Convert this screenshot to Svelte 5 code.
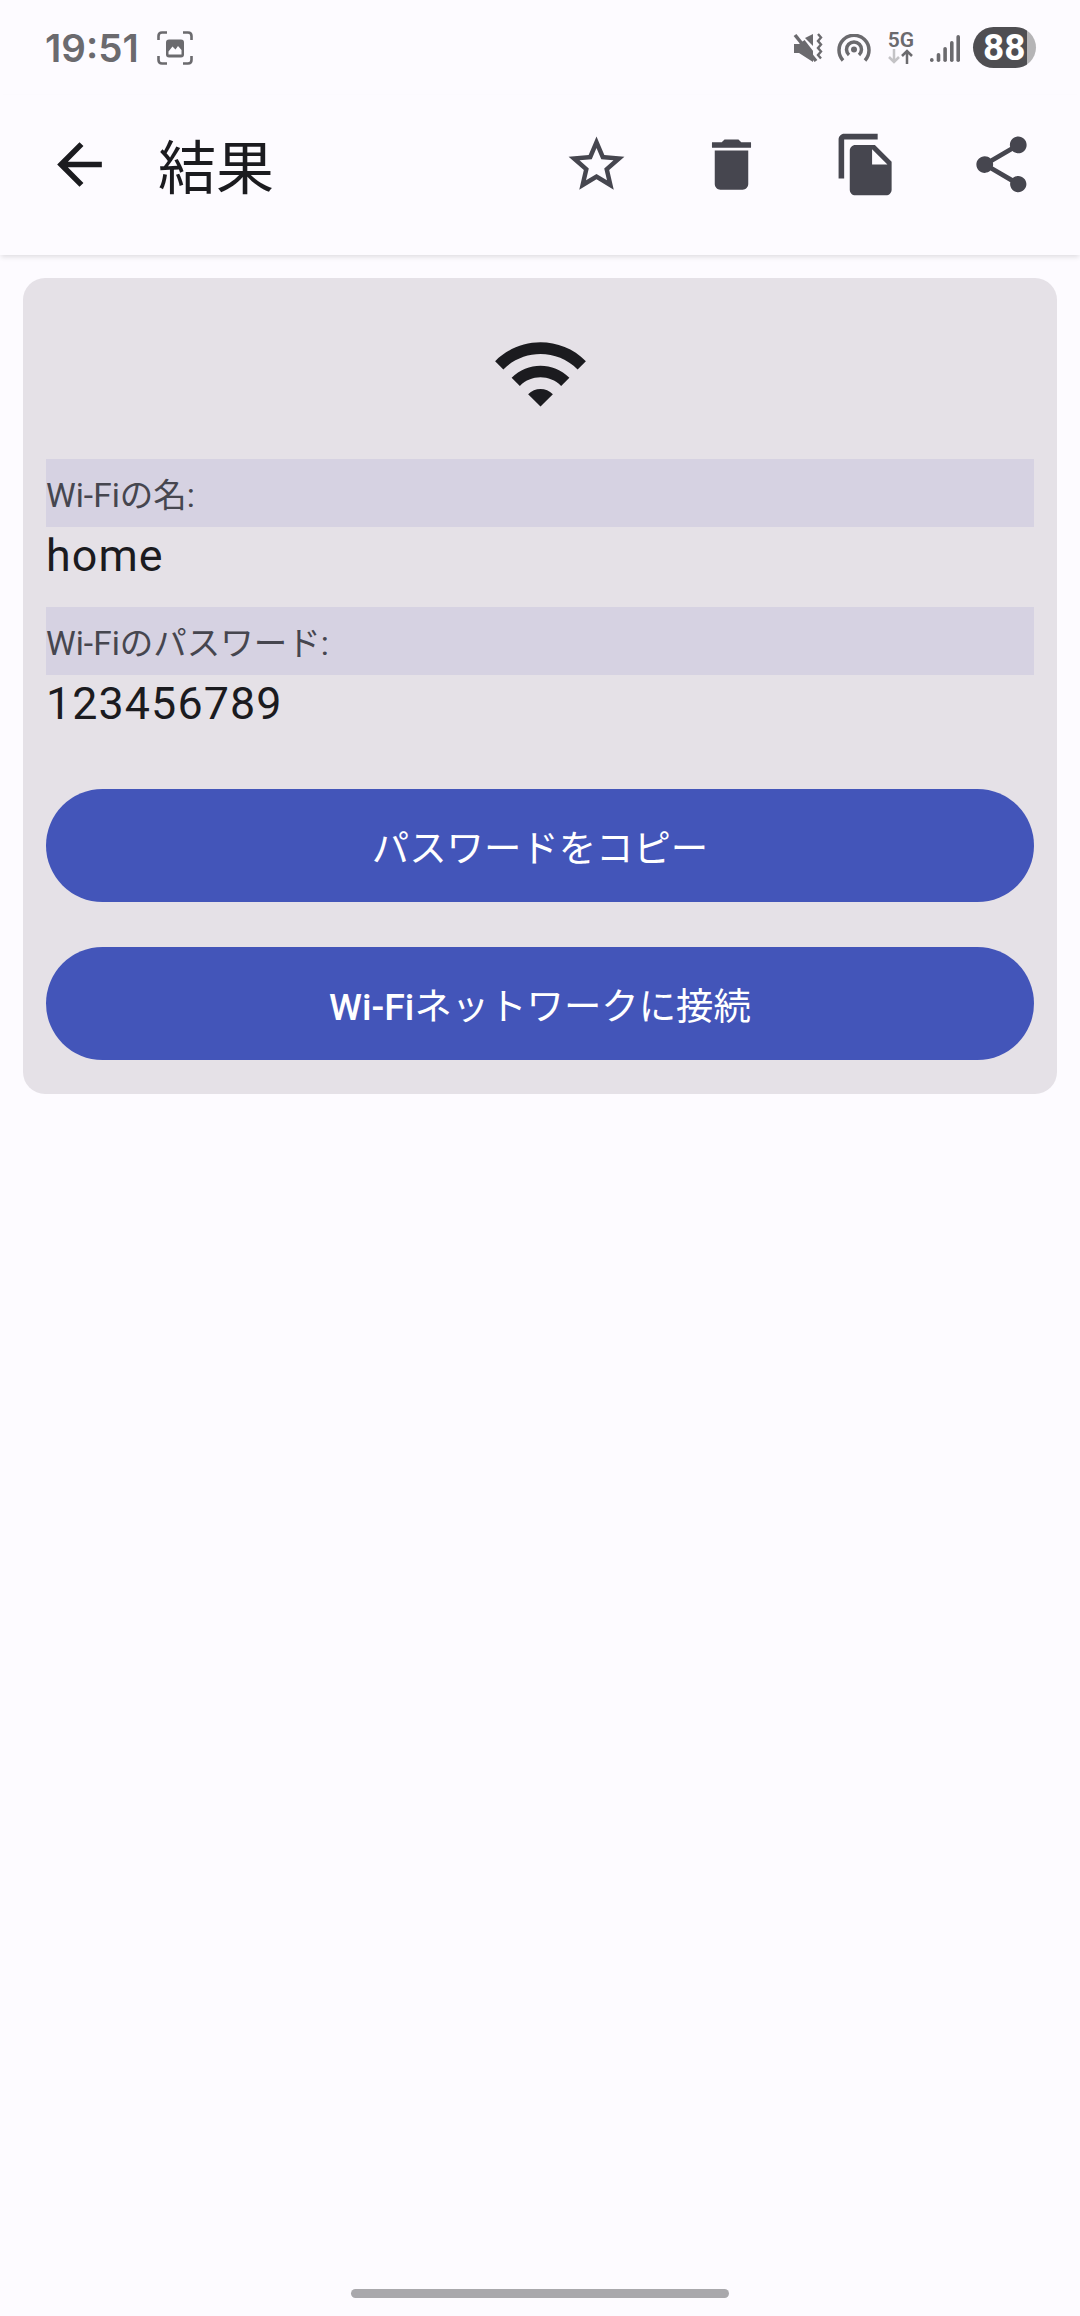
<script>
    const fields = [
        { label: 'Wi-Fiの名:', value: 'home' },
        { label: 'Wi-Fiのパスワード:', value: '123456789' }
    ]
    const toolbar = [
        'M22 9.24l-7.19-.62L12 2 9.19 8.63 2 9.24l5.46 4.73L5.82 21 12 17.27 18.18 21l-1.63-7.03L22 9.24zM12 15.4l-3.76 2.27 1-4.28-3.32-2.88 4.38-.38L12 6.1l1.71 4.04 4.38.38-3.32 2.88 1 4.28L12 15.4z',
        'M6 19c0 1.1.9 2 2 2h8c1.1 0 2-.9 2-2V7H6v12zM19 4h-3.5l-1-1h-5l-1 1H5v2h14V4z',
        'M16 1H4c-1.1 0-2 .9-2 2v14h2V3h12V1zm-1 4l6 6v10c0 1.1-.9 2-2 2H7.99C6.89 23 6 22.1 6 21l.01-14c0-1.1.89-2 1.99-2h7zm-1 7h5.5L14 6.5V12z',
        'M18 16.08c-.76 0-1.44.3-1.96.77L8.91 12.7c.05-.23.09-.46.09-.7s-.04-.47-.09-.7l7.05-4.11c.54.5 1.25.81 2.04.81 1.66 0 3-1.34 3-3s-1.34-3-3-3-3 1.34-3 3c0 .24.04.47.09.7L8.04 9.81C7.5 9.31 6.79 9 6 9c-1.66 0-3 1.34-3 3s1.34 3 3 3c.79 0 1.5-.31 2.04-.81l7.12 4.16c-.05.21-.08.43-.08.65 0 1.61 1.31 2.92 2.92 2.92 1.61 0 2.92-1.31 2.92-2.92s-1.31-2.92-2.92-2.92z'
    ]
</script>

<div class="page">
    <div class="status">
        <span class="time">19:51</span>
        <svg class="shot" viewBox="0 0 36 34" fill="none">
            <path d="M1.500 9V5q0-3.500 3.500-3.500h5M26 1.500h5q3.500 0 3.500 3.500v4M34.500 25v4q0 3.500-3.500 3.500h-5M10 32.500H5q-3.500 0-3.500-3.500v-4" stroke="#6b6a6e" stroke-width="2.600"/>
            <rect x="9" y="8.500" width="18" height="18" rx="3" fill="#6b6a6e"/>
            <path d="M11.500 23.500v-3l4-5 3 3 2.500-3.500 3.500 4v4.500z" fill="#fdfbff"/>
        </svg>
        <div class="status-right">
            <svg class="mute" viewBox="0 0 30 30">
                <path d="M1 11h5L20 1v28L6 20H1z" fill="#6b6a6e"/>
                <path d="M7 1l20 26v-26z" fill="#fdfbff"/>
                <path d="M12 5l8-4v12z" fill="#6b6a6e"/>
                <path d="M2 2l21 26" stroke="#6b6a6e" stroke-width="3.500"/>
                <path d="M25 1l3 3.500-3 3.500 3 3.500-3 3.500 3 3.500-3 3.500 3 3.500" stroke="#6b6a6e" stroke-width="2.400" fill="none"/>
            </svg>
            <svg class="hotspot" viewBox="0 0 34 28" fill="none" stroke="#6b6a6e" stroke-width="3.500">
                <path d="M6 26.500a15 15 0 1 1 22 0"/>
                <path d="M12 21a7.500 7.500 0 1 1 10 0"/>
                <circle cx="17" cy="15.500" r="3" fill="#6b6a6e" stroke="none"/>
            </svg>
            <div class="net">
                <span>5G</span>
                <svg viewBox="0 0 26 15" fill="none" stroke-width="2.500">
                    <path d="M6 0v13M1 8l5 5 5-5" stroke="#c4c3c6"/>
                    <path d="M19 15V2M14 7l5-5 5 5" stroke="#6b6a6e"/>
                </svg>
            </div>
            <svg class="signal" viewBox="0 0 30 30" fill="#6b6a6e">
                <rect x="0" y="25" width="3.600" height="4" rx="1.800"/>
                <rect x="6.700" y="20" width="3.600" height="9" rx="1.800"/>
                <rect x="13.300" y="14" width="3.600" height="15" rx="1.800"/>
                <rect x="20" y="8" width="3.600" height="21" rx="1.800"/>
                <rect x="26.400" y="2" width="3.600" height="27" rx="1.800"/>
            </svg>
            <div class="battery">88</div>
        </div>
    </div>

    <header class="bar">
        <svg class="icon" viewBox="0 0 24 24"><path class="dark" d="M20 11H7.830l5.590-5.590L12 4l-8 8 8 8 1.410-1.410L7.830 13H20v-2z"/></svg>
        <h1>結果</h1>
        <div class="tools">
            {#each toolbar as d}
                <svg class="icon" viewBox="0 0 24 24"><path d={d}/></svg>
            {/each}
        </div>
    </header>

    <main class="card">
        <svg class="wifi" viewBox="0 0 24 24"><path d="M1 9l2 2c4.970-4.970 13.030-4.970 18 0l2-2C16.930 2.930 7.080 2.930 1 9zm8 8l3 3 3-3c-1.650-1.660-4.340-1.660-6 0zm-4-4l2 2c2.760-2.760 7.240-2.760 10 0l2-2C15.140 9.140 8.870 9.140 5 13z"/></svg>
        {#each fields as f}
            <div class="field">
                <div class="label">{f.label}</div>
                <div class="value">{f.value}</div>
            </div>
        {/each}
        <div class="actions">
            <button>パスワードをコピー</button>
            <button><b>Wi-Fi</b>ネットワークに接続</button>
        </div>
    </main>

    <div class="home"></div>
</div>

<style>
    :global(body) {
        margin: 0;
        background: #fdfbff;
    }
    .page {
        height: 2316px;
        display: flex;
        flex-direction: column;
        overflow: hidden;
        font-family: Roboto, "Noto Sans CJK JP", sans-serif;
    }
    .status {
        height: 95px;
        box-sizing: border-box;
        padding: 0 44px 0 45px;
        display: flex;
        align-items: center;
        color: #6b6a6e;
    }
    .time {
        font: 600 38.500px Inter, sans-serif;
    }
    .shot {
        width: 36px;
        height: 34px;
        margin-left: 18px;
    }
    .status-right {
        margin-left: auto;
        display: flex;
        align-items: center;
    }
    .mute { width: 30px; height: 30px; }
    .hotspot { width: 34px; height: 28px; margin-left: 14px; }
    .net {
        width: 26px;
        margin-left: 17px;
        display: flex;
        flex-direction: column;
        align-items: center;
        font: 600 21px/18px Roboto, sans-serif;
    }
    .net svg { width: 26px; height: 15px; }
    .signal { width: 30px; height: 30px; margin-left: 16px; }
    .battery {
        width: 63px;
        height: 41px;
        margin-left: 13px;
        padding-left: 10px;
        box-sizing: border-box;
        border-radius: 21px;
        background: linear-gradient(to right, #4f4e52 86%, #b5b4b6 86%);
        color: #fff;
        font: 700 37px/41px Roboto, sans-serif;
    }
    .bar {
        height: 160px;
        box-sizing: border-box;
        padding: 0 45px 22px 46px;
        display: flex;
        align-items: center;
        box-shadow: 0 3px 5px -1px rgba(0, 0, 0, 0.12);
    }
    .bar h1 {
        margin: 0 0 0 45px;
        font-size: 58px;
        font-weight: 400;
        color: #1b1b1f;
    }
    .tools {
        margin-left: auto;
        display: flex;
        gap: 68px;
    }
    .icon {
        width: 67px;
        height: 67px;
        fill: #46464f;
        flex: none;
    }
    .icon .dark { fill: #1b1b1f; }
    .card {
        margin: 23px 23px 0;
        padding: 46px 23px 34px;
        height: 816px;
        box-sizing: border-box;
        background: #e5e1e7;
        border-radius: 22px;
        display: flex;
        flex-direction: column;
    }
    .wifi {
        width: 99px;
        height: 99px;
        fill: #1b1b1f;
        align-self: center;
        margin-bottom: 36px;
    }
    .field {
        height: 148px;
        flex: none;
    }
    .label {
        height: 68px;
        box-sizing: border-box;
        padding-top: 17px;
        background: #d6d2e2;
        color: #46464f;
        font-size: 33.500px;
        line-height: 40px;
    }
    .value {
        padding-top: 3px;
        color: #1b1b1f;
        font-size: 44.800px;
        line-height: 52px;
        letter-spacing: 1.100px;
    }
    .actions {
        margin-top: 34px;
        display: flex;
        flex-direction: column;
        gap: 45px;
    }
    button {
        height: 113px;
        border: 0;
        border-radius: 57px;
        background: #4355b9;
        color: #fff;
        font-family: inherit;
        font-size: 37.400px;
        font-weight: 400;
    }
    button b { font-weight: 500; }
    .home {
        margin: auto auto 18px;
        width: 378px;
        height: 9px;
        border-radius: 5px;
        background: #a9a8ac;
    }
</style>
